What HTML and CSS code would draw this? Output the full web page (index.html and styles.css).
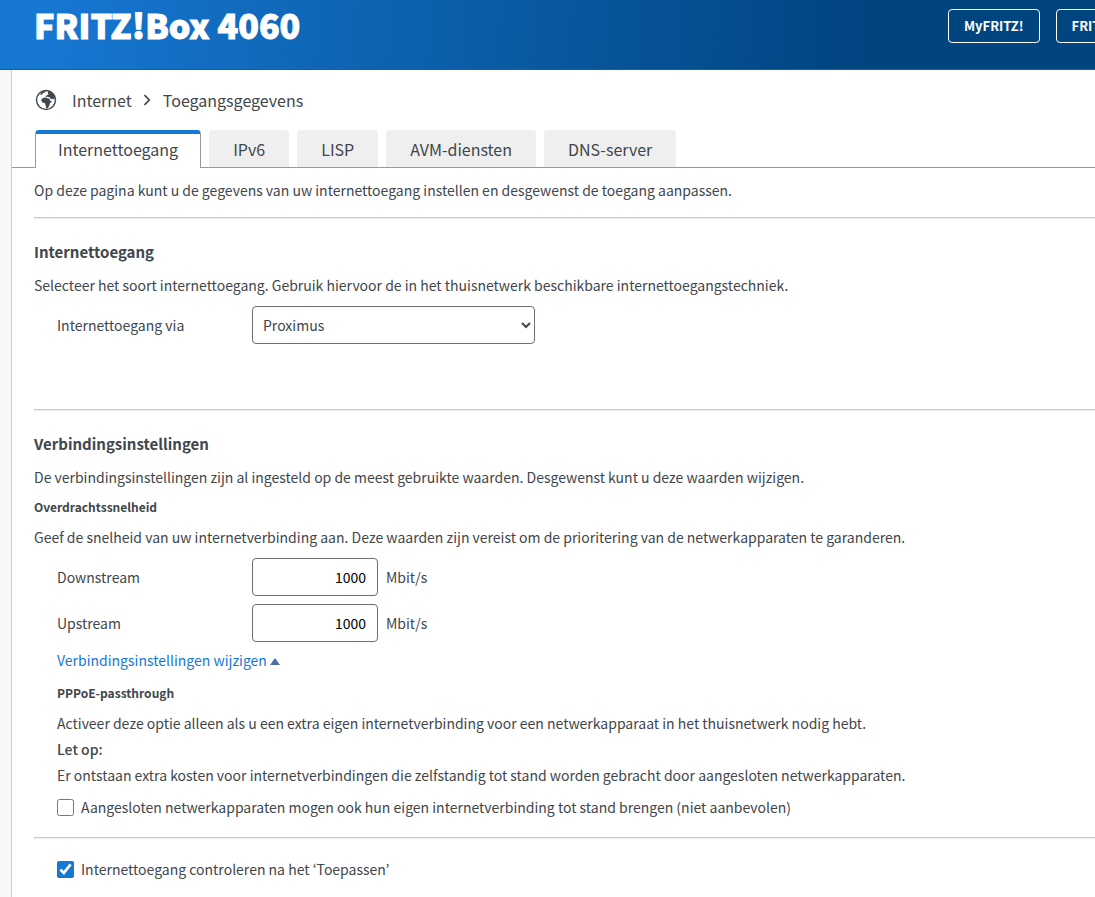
FILE: index.html
```html
<!DOCTYPE html>
<html lang="nl">
<head>
    <meta charset="UTF-8">
    <title>FRITZ!Box 4060</title>
    <link rel="stylesheet" href="styles.css">
</head>
<body>
    <header class="header">
        <span class="title">FRITZ!Box 4060</span>
        <nav class="header-nav">
            <a href="#">MyFRITZ!</a>
            <a href="#">FRITZ!NAS</a>
        </nav>
    </header>
    <div class="wrapper">
        <aside class="side"></aside>
        <main class="main">
            <div class="breadcrumb">
                <svg class="globe" viewBox="0 0 22 22" width="22" height="22">
                    <circle cx="11" cy="11" r="9.500" fill="none" stroke="#3f464c" stroke-width="1.400"/>
                    <path fill="#3f464c" d="M13.500 2c3 .8 5.800 3.300 6.800 6.800l-1.600 1.700-1.500-1-1.200 1.200-1-2.200-2.600-.7-2 .2 1.200-1.800 2-.4-.8-1.600zM5.500 4.500l3-2 2.500-.3-1.500 1.600-1.300.3-1 1.500-1.600.4z"/>
                    <path fill="#3f464c" d="M6.500 10l2-1.300 2.500-.2 1.200.8 2 .1 1.200 2.500h1.600l-2.200 2.700-.4 2.200-2 2.700-1.300-.5-.6-3.200-.6-1.900-2-.2-1.400-1.500z"/>
                </svg>
                <a href="#">Internet</a>
                <svg class="chevron" viewBox="0 0 8 12" width="8" height="12">
                    <path d="M1.500 1.200L6.300 6l-4.800 4.800" fill="none" stroke="#3f464c" stroke-width="1.700"/>
                </svg>
                <a href="#">Toegangsgegevens</a>
            </div>
            <ul class="tabs">
                <li class="active"><a href="#">Internettoegang</a></li>
                <li><a href="#">IPv6</a></li>
                <li><a href="#">LISP</a></li>
                <li><a href="#">AVM-diensten</a></li>
                <li><a href="#">DNS-server</a></li>
            </ul>
            <form class="content">
                <p>Op deze pagina kunt u de gegevens van uw internettoegang instellen en desgewenst de toegang aanpassen.</p>
                <hr>
                <section class="access">
                    <h2>Internettoegang</h2>
                    <p>Selecteer het soort internettoegang. Gebruik hiervoor de in het thuisnetwerk beschikbare internettoegangstechniek.</p>
                    <div class="row">
                        <label for="provider">Internettoegang via</label>
                        <select id="provider">
                            <option>Proximus</option>
                        </select>
                    </div>
                </section>
                <hr>
                <section class="connection">
                    <h2>Verbindingsinstellingen</h2>
                    <p>De verbindingsinstellingen zijn al ingesteld op de meest gebruikte waarden. Desgewenst kunt u deze waarden wijzigen.</p>
                    <h3>Overdrachtssnelheid</h3>
                    <p>Geef de snelheid van uw internetverbinding aan. Deze waarden zijn vereist om de prioritering van de netwerkapparaten te garanderen.</p>
                    <div class="row">
                        <label for="down">Downstream</label>
                        <input type="text" id="down" value="1000">
                        <span class="unit">Mbit/s</span>
                    </div>
                    <div class="row">
                        <label for="up">Upstream</label>
                        <input type="text" id="up" value="1000">
                        <span class="unit">Mbit/s</span>
                    </div>
                    <div class="indent">
                        <a href="#" class="toggle">Verbindingsinstellingen wijzigen</a>
                        <h3>PPPoE-passthrough</h3>
                        <p>Activeer deze optie alleen als u een extra eigen internetverbinding voor een netwerkapparaat in het thuisnetwerk nodig hebt.</p>
                        <p class="note"><strong>Let op:</strong></p>
                        <p class="note">Er ontstaan extra kosten voor internetverbindingen die zelfstandig tot stand worden gebracht door aangesloten netwerkapparaten.</p>
                        <div class="check">
                            <input type="checkbox" id="passthrough">
                            <label for="passthrough">Aangesloten netwerkapparaten mogen ook hun eigen internetverbinding tot stand brengen (niet aanbevolen)</label>
                        </div>
                    </div>
                </section>
                <hr>
                <div class="indent">
                    <div class="check">
                        <input type="checkbox" id="verify" checked>
                        <label for="verify">Internettoegang controleren na het ‘Toepassen’</label>
                    </div>
                </div>
            </form>
        </main>
    </div>
</body>
</html>
```
FILE: styles.css
```css
*{
    margin: 0;
    padding: 0;
    box-sizing: border-box;
}
body{
    font: 14px/20px "Noto Sans CJK KR", "Open Sans", sans-serif;
    color: #3f464c;
    background: #fff;
    min-height: 100vh;
    display: flex;
    flex-direction: column;
}
ul{
    list-style: none;
}
a{
    color: inherit;
    text-decoration: none;
}
.header{
    display: flex;
    justify-content: space-between;
    height: 70px;
    padding: 9px 0 0 34px;
    overflow: hidden;
    color: #fff;
    background: linear-gradient(95deg, #1778d3 0%, #1778d3 3%, #004480 79%);
    border-bottom: 1px solid #1460a6;
}
.title{
    font-size: 34px;
    font-weight: 900;
    line-height: 32px;
    -webkit-text-stroke: 1px #fff;
}
.header-nav{
    display: flex;
    gap: 16px;
    width: 147px;
}
.header-nav a{
    flex: none;
    height: 34px;
    padding: 0 15px;
    border: 1px solid #fff;
    border-radius: 4px;
    font-size: 13px;
    font-weight: bold;
    line-height: 32px;
}
.wrapper{
    display: flex;
    flex: 1;
}
.side{
    width: 12px;
    background: #f8f8f8;
    border-right: 1px solid #ccc;
}
.main{
    flex: 1;
    min-width: 0;
}
.breadcrumb{
    display: flex;
    align-items: center;
    height: 60px;
    padding-left: 23px;
    font-size: 16px;
}
.globe{
    margin-right: 15px;
}
.chevron{
    margin: 0 12px 0 11px;
}
.tabs{
    display: flex;
    gap: 8px;
    padding-left: 23px;
    border-bottom: 1px solid #999;
}
.tabs li{
    height: 37px;
    padding: 0 24px;
    border-radius: 4px 4px 0 0;
    background: #efefef;
    font-size: 16px;
    line-height: 38px;
}
.tabs .active{
    height: 38px;
    margin-bottom: -1px;
    padding: 0 22px;
    border: 1px solid #999;
    border-top: 4px solid #1778d3;
    border-bottom: 0;
    background: #fff;
    line-height: 30px;
}
.content{
    padding: 12px 0 18px 22px;
}
hr{
    height: 2px;
    margin: 17px 0 23px;
    border: 1px solid #ccc;
    border-right: 0;
    border-bottom-color: #eee;
}
h2{
    margin-bottom: 13px;
    font-size: 15px;
    font-weight: bold;
    line-height: 20px;
}
h3{
    margin: 10px 0;
    font-size: 12px;
    font-weight: bold;
    line-height: 20px;
}
strong{
    font-weight: 500;
}
.access{
    padding-bottom: 48px;
}
.row{
    display: flex;
    align-items: center;
    margin-top: 8px;
    padding-left: 23px;
}
p + .row{
    margin-top: 11px;
}
.row label{
    width: 195px;
}
.row select,
.row input{
    height: 38px;
    border: 1px solid #6b7075;
    border-radius: 4px;
    background: #fff;
    font: inherit;
}
.row select{
    width: 283px;
    padding-left: 6px;
    color: #3f464c;
}
.row input{
    width: 126px;
    padding: 0 11px;
    color: #000;
    text-align: right;
}
.unit{
    margin-left: 8px;
}
.indent{
    padding-left: 23px;
}
.toggle{
    display: flex;
    align-items: center;
    gap: 3px;
    margin: 8px 0 13px;
    color: #1778d3;
}
.toggle::after{
    content: "";
    margin-top: 3px;
    border: 5px solid transparent;
    border-top: 0;
    border-bottom: 7px solid #4a6ea9;
}
.note{
    margin-top: 6px;
}
.check{
    display: flex;
    align-items: center;
    gap: 7px;
    margin-top: 12px;
}
.check input{
    width: 17px;
    height: 17px;
    accent-color: #1778d3;
}
hr + .indent{
    margin-top: -3px;
}
.connection{
    padding-bottom: 3px;
}
```
